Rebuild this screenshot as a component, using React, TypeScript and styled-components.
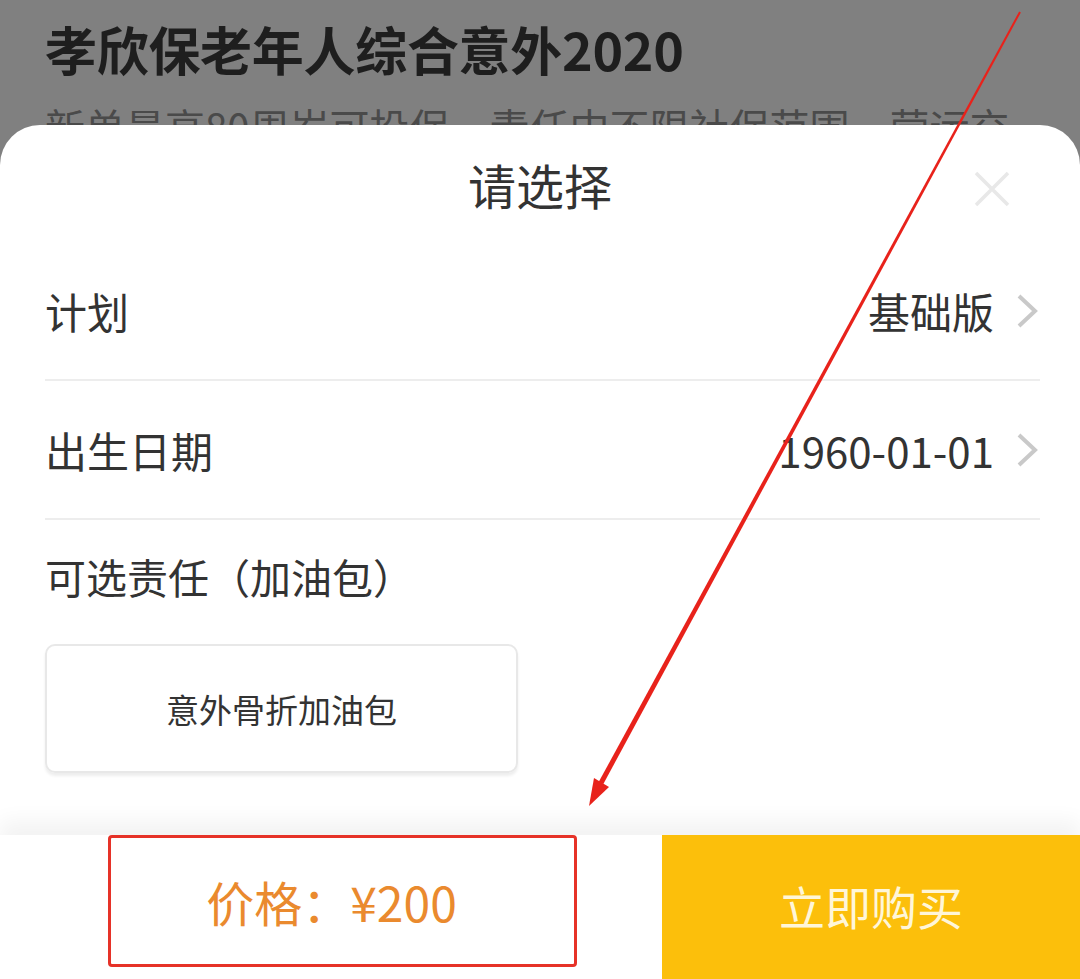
import React from "react";
import styled, { createGlobalStyle } from "styled-components";

const GlobalStyle = createGlobalStyle`
  html, body {
    margin: 0;
    padding: 0;
  }
  body {
    font-family: "Noto Sans CJK SC", "Noto Sans", sans-serif;
    color: #333;
  }
`;

const Page = styled.div`
  position: relative;
  height: 100vh;
  min-height: 979px;
  background: #808080;
  overflow: hidden;
`;

const Backdrop = styled.div`
  padding: 18px 45px 0;
`;

const ProductTitle = styled.h1`
  margin: 0;
  font-size: 52px;
  line-height: 62px;
  font-weight: 700;
  color: #1e1e1e;
  letter-spacing: -0.3px;
`;

const ProductDesc = styled.p`
  margin: 22px 0 0;
  font-size: 40px;
  line-height: 48px;
  color: #4a4a4a;
  white-space: nowrap;
`;

const Sheet = styled.div`
  position: absolute;
  top: 125px;
  left: 0;
  right: 0;
  bottom: 0;
  background: #fff;
  border-radius: 40px 40px 0 0;
  display: flex;
  flex-direction: column;
`;

const SheetHeader = styled.div`
  height: 117px;
  display: flex;
  align-items: center;
  justify-content: center;
  position: relative;
`;

const SheetTitle = styled.div`
  font-size: 48px;
  color: #333;
`;

const CloseButton = styled.button`
  position: absolute;
  right: 68px;
  top: 44px;
  width: 40px;
  height: 40px;
  padding: 0;
  border: none;
  background: none;
  display: flex;
  align-items: center;
  justify-content: center;
`;

const Body = styled.div`
  padding: 0 40px 0 45px;
`;

const Row = styled.div`
  height: 137px;
  display: flex;
  align-items: center;
  justify-content: space-between;
  border-bottom: 2px solid #ededed;
`;

const RowLabel = styled.div`
  font-size: 42px;
  color: #333;
`;

const RowValue = styled.div`
  display: flex;
  align-items: center;
  gap: 20px;
  font-size: 42px;
  color: #333;
`;

const Section = styled.div`
  padding-top: 32px;
`;

const SectionLabel = styled.div`
  font-size: 41px;
  line-height: 48px;
  color: #333;
`;

const OptionCard = styled.div`
  margin-top: 44px;
  width: 473px;
  height: 129px;
  box-sizing: border-box;
  border: 2px solid #e8e8e8;
  border-radius: 10px;
  box-shadow: 0 3px 3px rgba(0, 0, 0, 0.07);
  display: flex;
  align-items: center;
  justify-content: center;
  font-size: 33px;
  color: #333;
`;

const Footer = styled.div`
  margin-top: auto;
  height: 144px;
  display: flex;
  align-items: flex-start;
  background: #fff;
  box-shadow: 0 -14px 20px rgba(0, 0, 0, 0.05);
`;

const PriceCell = styled.div`
  width: 662px;
  padding-left: 108px;
  box-sizing: border-box;
`;

const PriceBox = styled.div`
  width: 469px;
  height: 132px;
  box-sizing: border-box;
  border: 3px solid #e63228;
  border-radius: 4px;
  display: flex;
  align-items: center;
  justify-content: center;
  padding-right: 22px;
  font-size: 48px;
  color: #ea8a2e;
`;

const BuyButton = styled.button`
  flex: 1;
  height: 144px;
  border: none;
  background: #fcbf0b;
  color: #fff6d8;
  font-family: inherit;
  font-size: 46px;
  padding: 0 0 4px;
`;

const Annotation = styled.svg`
  position: absolute;
  inset: 0;
  pointer-events: none;
`;

const Chevron = () => (
  <svg width="26" height="38" viewBox="0 0 26 38">
    <path d="M5 4 L21 19 L5 34" fill="none" stroke="#c9c9c9" strokeWidth="4" />
  </svg>
);

const CloseIcon = () => (
  <svg width="38" height="38" viewBox="0 0 38 38">
    <path d="M3 3 L35 35 M35 3 L3 35" stroke="#e8e8e8" strokeWidth="3.5" />
  </svg>
);

const rows = [
  { label: "计划", value: "基础版" },
  { label: "出生日期", value: "1960-01-01" },
];

export default function App() {
  return (
    <Page>
      <GlobalStyle />
      <Backdrop>
        <ProductTitle>孝欣保老年人综合意外2020</ProductTitle>
        <ProductDesc>新单最高80周岁可投保，责任中不限社保范围，营运交</ProductDesc>
      </Backdrop>
      <Sheet>
        <SheetHeader>
          <SheetTitle>请选择</SheetTitle>
          <CloseButton aria-label="关闭">
            <CloseIcon />
          </CloseButton>
        </SheetHeader>
        <Body>
          {rows.map((r) => (
            <Row key={r.label}>
              <RowLabel>{r.label}</RowLabel>
              <RowValue>
                {r.value}
                <Chevron />
              </RowValue>
            </Row>
          ))}
          <Section>
            <SectionLabel>可选责任（加油包）</SectionLabel>
            <OptionCard>意外骨折加油包</OptionCard>
          </Section>
        </Body>
        <Footer>
          <PriceCell>
            <PriceBox>价格：¥200</PriceBox>
          </PriceCell>
          <BuyButton>立即购买</BuyButton>
        </Footer>
      </Sheet>
      <Annotation width="1080" height="979" viewBox="0 0 1080 979">
        <polygon
          points="1020.9,12.5 1019.1,11.5 598.8,781.8 603.2,784.2"
          fill="#e8221b"
        />
        <polygon points="589,806 594,778 609,787" fill="#e8221b" />
      </Annotation>
    </Page>
  );
}
